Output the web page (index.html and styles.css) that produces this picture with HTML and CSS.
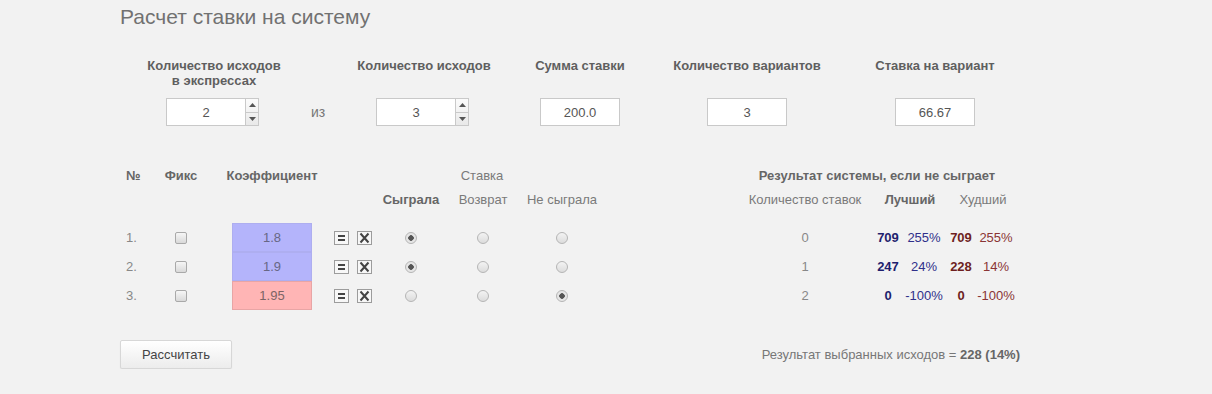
FILE: index.html
```html
<!DOCTYPE html>
<html lang="ru">
<head>
<meta charset="utf-8">
<title>Расчет ставки на систему</title>
<link rel="stylesheet" href="styles.css">
</head>
<body>
<div class="page">
  <h1 class="title">Расчет ставки на систему</h1>

  <div class="params">
    <div class="param p1">
      <div class="plabel">Количество исходов<br>в экспрессах</div>
      <div class="spin">
        <input class="field" value="2">
        <span class="spin-btns">
          <span class="sb sb-up"><svg width="9" height="6" viewBox="0 0 9 6"><polygon points="1,5 4.5,1 8,5" fill="#555"/></svg></span>
          <span class="sb"><svg width="9" height="6" viewBox="0 0 9 6"><polygon points="1,1 4.5,5 8,1" fill="#555"/></svg></span>
        </span>
      </div>
    </div>
    <div class="param pfrom">
      <div class="plabel"></div>
      <div class="from">из</div>
    </div>
    <div class="param p2">
      <div class="plabel">Количество исходов</div>
      <div class="spin">
        <input class="field" value="3">
        <span class="spin-btns">
          <span class="sb sb-up"><svg width="9" height="6" viewBox="0 0 9 6"><polygon points="1,5 4.5,1 8,5" fill="#555"/></svg></span>
          <span class="sb"><svg width="9" height="6" viewBox="0 0 9 6"><polygon points="1,1 4.5,5 8,1" fill="#555"/></svg></span>
        </span>
      </div>
    </div>
    <div class="param p3">
      <div class="plabel">Сумма ставки</div>
      <input class="field" value="200.0">
    </div>
    <div class="param p4">
      <div class="plabel">Количество вариантов</div>
      <input class="field" value="3">
    </div>
    <div class="param p5">
      <div class="plabel">Ставка на вариант</div>
      <input class="field" value="66.67">
    </div>
  </div>

  <div class="grid">
    <div class="g-no hb">№</div>
    <div class="g-fix hb">Фикс</div>
    <div class="g-coef hb">Коэффициент</div>
    <div class="g-stake hn">Ставка</div>
    <div class="g-res hb">Результат системы, если не сыграет</div>

    <div class="g-won hb h2">Сыграла</div>
    <div class="g-ret hn h2">Возврат</div>
    <div class="g-lost hn h2">Не сыграла</div>
    <div class="g-cnt hn h2">Количество ставок</div>
    <div class="g-best hb h2">Лучший</div>
    <div class="g-worst hn h2">Худший</div>

    <!-- row 1 -->
    <div class="g-no num">1.</div>
    <div class="g-fix"><input type="checkbox" class="chk"></div>
    <div class="g-coef"><div class="coef blue">1.8</div></div>
    <div class="g-act act">
      <span class="ib"><svg width="13" height="12" viewBox="0 0 13 12"><rect x="3" y="3" width="7" height="2" fill="#444"/><rect x="3" y="7" width="7" height="2" fill="#444"/></svg></span>
      <span class="ib"><svg width="13" height="12" viewBox="0 0 13 12"><path d="M2.5 1.5 L10.5 10.5 M10.5 1.5 L2.5 10.5" stroke="#444" stroke-width="2"/></svg></span>
    </div>
    <div class="g-won"><input type="radio" name="r1" class="rad" checked></div>
    <div class="g-ret"><input type="radio" name="r1" class="rad"></div>
    <div class="g-lost"><input type="radio" name="r1" class="rad"></div>
    <div class="g-cnt cnt">0</div>
    <div class="g-bn bn">709</div>
    <div class="g-bp bp">255%</div>
    <div class="g-wn wn">709</div>
    <div class="g-wp wp">255%</div>

    <!-- row 2 -->
    <div class="g-no num">2.</div>
    <div class="g-fix"><input type="checkbox" class="chk"></div>
    <div class="g-coef"><div class="coef blue">1.9</div></div>
    <div class="g-act act">
      <span class="ib"><svg width="13" height="12" viewBox="0 0 13 12"><rect x="3" y="3" width="7" height="2" fill="#444"/><rect x="3" y="7" width="7" height="2" fill="#444"/></svg></span>
      <span class="ib"><svg width="13" height="12" viewBox="0 0 13 12"><path d="M2.5 1.5 L10.5 10.5 M10.5 1.5 L2.5 10.5" stroke="#444" stroke-width="2"/></svg></span>
    </div>
    <div class="g-won"><input type="radio" name="r2" class="rad" checked></div>
    <div class="g-ret"><input type="radio" name="r2" class="rad"></div>
    <div class="g-lost"><input type="radio" name="r2" class="rad"></div>
    <div class="g-cnt cnt">1</div>
    <div class="g-bn bn">247</div>
    <div class="g-bp bp">24%</div>
    <div class="g-wn wn">228</div>
    <div class="g-wp wp">14%</div>

    <!-- row 3 -->
    <div class="g-no num">3.</div>
    <div class="g-fix"><input type="checkbox" class="chk"></div>
    <div class="g-coef"><div class="coef pink">1.95</div></div>
    <div class="g-act act">
      <span class="ib"><svg width="13" height="12" viewBox="0 0 13 12"><rect x="3" y="3" width="7" height="2" fill="#444"/><rect x="3" y="7" width="7" height="2" fill="#444"/></svg></span>
      <span class="ib"><svg width="13" height="12" viewBox="0 0 13 12"><path d="M2.5 1.5 L10.5 10.5 M10.5 1.5 L2.5 10.5" stroke="#444" stroke-width="2"/></svg></span>
    </div>
    <div class="g-won"><input type="radio" name="r3" class="rad"></div>
    <div class="g-ret"><input type="radio" name="r3" class="rad"></div>
    <div class="g-lost"><input type="radio" name="r3" class="rad" checked></div>
    <div class="g-cnt cnt">2</div>
    <div class="g-bn bn">0</div>
    <div class="g-bp bp">-100%</div>
    <div class="g-wn wn">0</div>
    <div class="g-wp wp">-100%</div>
  </div>

  <div class="footer">
    <button class="btn">Рассчитать</button>
    <div class="summary">Результат выбранных исходов = <b>228 (14%)</b></div>
  </div>
</div>
</body>
</html>
```

FILE: styles.css
```css
html, body {
  margin: 0;
  padding: 0;
}

body {
  background: #f2f2f2;
  font-family: "Liberation Sans", Arial, sans-serif;
  font-size: 13px;
  color: #666;
}

.page {
  margin-left: 120px;
  width: 900px;
}

.title {
  margin: 5px 0 0;
  font-size: 21px;
  font-weight: normal;
  line-height: 24px;
  color: #717171;
}

/* ---------- parameters ---------- */
.params {
  display: flex;
  margin-top: 29px;
  padding-left: 20px;
}

.param {
  flex: none;
  display: flex;
  flex-direction: column;
  align-items: center;
}

.p1 { width: 148px; }
.pfrom { width: 60px; }
.p2 { width: 152px; }
.p3 { width: 160px; }
.p4 { width: 174px; }
.p5 { width: 202px; }

.plabel {
  height: 30px;
  margin-bottom: 10px;
  line-height: 15px;
  font-weight: bold;
  text-align: center;
  color: #5f5f5f;
  white-space: nowrap;
}

.field {
  box-sizing: border-box;
  width: 80px;
  height: 28px;
  margin: 0;
  padding: 0;
  border: 1px solid #c9c9c9;
  background: #fff;
  font: 13px "Liberation Sans", Arial, sans-serif;
  color: #555;
  text-align: center;
  outline: none;
}

.spin {
  display: flex;
  margin-right: 3px;
}

.spin-btns {
  display: flex;
  flex-direction: column;
  box-sizing: border-box;
  width: 13px;
  height: 28px;
  border: 1px solid #c9c9c9;
  border-left: none;
  background: linear-gradient(#fbfbfb, #e9e9e9);
}

.sb {
  flex: 1;
  display: flex;
  align-items: center;
  justify-content: center;
}

.sb-up {
  border-bottom: 1px solid #c9c9c9;
}

.from {
  height: 28px;
  line-height: 28px;
  font-size: 14px;
  color: #777;
}

/* ---------- table ---------- */
.grid {
  display: grid;
  margin-top: 38px;
  grid-template-columns: 30px 62px 120px 44px 70px 74px 84px 144px 114px 8px 36px 36px 2px 34px 36px;
  grid-template-rows: 24px 35px 29px 29px 29px;
  align-items: center;
  justify-items: center;
  line-height: 24px;
  white-space: nowrap;
}

.hb { font-weight: bold; color: #666; }
.hn { color: #7a7a7a; }
.h2 { align-self: start; }

.g-no { grid-column: 1; justify-self: start; padding-left: 6px; }
.g-fix { grid-column: 2; }
.g-coef { grid-column: 3; }
.g-act { grid-column: 4; }
.g-won { grid-column: 5; }
.g-ret { grid-column: 6; }
.g-lost { grid-column: 7; }
.g-stake { grid-column: 5 / 8; padding-right: 16px; }
.g-cnt { grid-column: 9; }
.g-res { grid-column: 9 / 16; padding-right: 8px; }
.g-bn { grid-column: 11; }
.g-bp { grid-column: 12; }
.g-wn { grid-column: 14; }
.g-wp { grid-column: 15; }
.g-best { grid-column: 11 / 13; padding-left: 8px; }
.g-worst { grid-column: 14 / 16; padding-left: 8px; }

.num { color: #888; line-height: 29px; }
.cnt { color: #888; }

.coef {
  box-sizing: border-box;
  width: 80px;
  height: 29px;
  line-height: 27px;
  text-align: center;
  color: #676785;
}

.blue {
  background: #b4b4fb;
  border: 1px solid #aeaef0;
}

.pink {
  background: #ffb5b5;
  border: 1px solid #e8a5a5;
  color: #7d6464;
}

.act {
  display: flex;
  gap: 8px;
  justify-self: start;
  margin-left: 2px;
}

.ib {
  display: flex;
  align-items: center;
  justify-content: center;
  box-sizing: border-box;
  width: 15px;
  height: 14px;
  border: 1px solid #9c9c9c;
  background: #f7f7f7;
}

.chk {
  appearance: none;
  -webkit-appearance: none;
  display: block;
  box-sizing: border-box;
  width: 12px;
  height: 12px;
  margin: 0;
  border: 1px solid #a9a9a9;
  border-radius: 2px;
  background: linear-gradient(#f6f6f6, #d9d9d9);
}

.rad {
  appearance: none;
  -webkit-appearance: none;
  display: block;
  box-sizing: border-box;
  width: 12px;
  height: 12px;
  margin: 1px 0 0;
  border: 1px solid #b5b5b5;
  border-radius: 50%;
  background: linear-gradient(#f3f3f3, #dcdcdc);
}

.rad:checked {
  background: radial-gradient(circle, #555 0, #555 2.5px, #e4e4e4 3px, #eaeaea 100%);
}

.bn { font-weight: bold; color: #1f1f6e; }
.bp { color: #30308a; }
.wn { font-weight: bold; color: #6e1f1f; }
.wp { color: #8a3535; }

/* ---------- footer ---------- */
.footer {
  display: flex;
  justify-content: space-between;
  align-items: center;
  margin-top: 30px;
}

.btn {
  box-sizing: border-box;
  width: 112px;
  height: 29px;
  margin: 0;
  padding: 0;
  border: 1px solid #d7d7d7;
  border-radius: 2px;
  background: linear-gradient(#ffffff, #ececec);
  box-shadow: 0 1px 1px rgba(0, 0, 0, 0.08);
  font: 13px "Liberation Sans", Arial, sans-serif;
  color: #444;
}

.summary {
  color: #777;
}

.summary b {
  color: #666;
}
```
